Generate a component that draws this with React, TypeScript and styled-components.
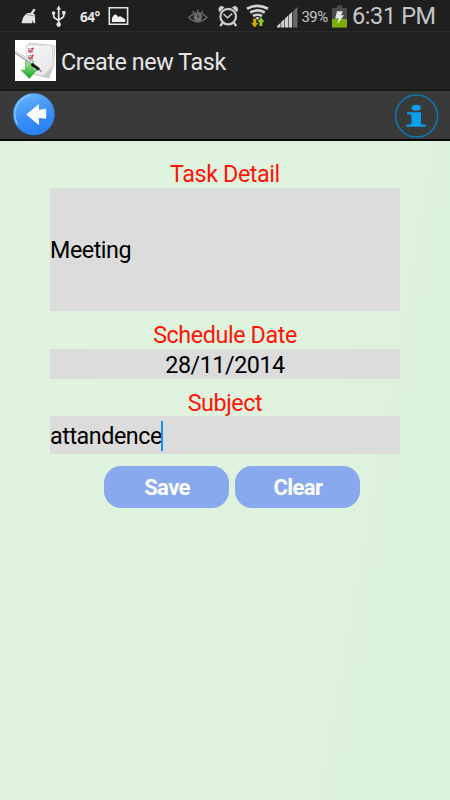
import React from "react";
import styled, { createGlobalStyle } from "styled-components";

const Global = createGlobalStyle`
  * { box-sizing: border-box; }
  body { margin: 0; background: #def2de; font-family: Roboto, "Liberation Sans", sans-serif; }
`;

const Screen = styled.div`
  width: 450px;
  height: 800px;
  overflow: hidden;
  display: flex;
  flex-direction: column;
  background: linear-gradient(100deg, #dff3df 0%, #def2de 70%, #dcf2dc 100%);
`;

const StatusBar = styled.header`
  height: 32px;
  flex: none;
  display: flex;
  background: #1f1f1f;
  border-bottom: 1px solid #2b2b2b;
  color: #c6c6c6;
`;

const Icon = styled.svg<{ $gap?: number }>`
  display: block;
  flex: none;
  margin-left: ${(p) => p.$gap ?? 0}px;
`;

const StatusText = styled.span<{ $size: number; $gap: number; $width: number; $line: number; $bold?: boolean; $spacing?: number }>`
  flex: none;
  font-family: ${(p) => (p.$bold ? '"Open Sans", sans-serif' : "Roboto, sans-serif")};
  color: ${(p) => (p.$bold ? "#e4e4e4" : "inherit")};
  font-size: ${(p) => p.$size}px;
  margin-left: ${(p) => p.$gap}px;
  width: ${(p) => p.$width}px;
  line-height: ${(p) => p.$line}px;
  font-weight: ${(p) => (p.$bold ? 700 : 400)};
  letter-spacing: ${(p) => p.$spacing ?? 0}px;
  white-space: nowrap;
`;

const TitleBar = styled.div`
  height: 59px;
  flex: none;
  display: flex;
  align-items: center;
  padding: 0 0 0 15px;
  background: #222;
  border-bottom: 2px solid #181818;
`;

const Title = styled.h1`
  margin: 2px 0 0 5px;
  font-size: 23.3px;
  line-height: 28px;
  font-weight: 400;
  letter-spacing: -0.4px;
  color: #e6e6e6;
  white-space: nowrap;
`;

const Toolbar = styled.nav`
  height: 50px;
  flex: none;
  display: flex;
  justify-content: space-between;
  padding: 0 10px 0 11px;
  background: #3a3a3a;
  border-bottom: 2px solid #080808;
`;

const ToolButton = styled.button`
  padding: 0;
  border: 0;
  background: none;
  display: flex;
  align-items: flex-start;
`;

const Form = styled.main`
  width: 350px;
  margin: 19px auto 0 50px;
  display: flex;
  flex-direction: column;
`;

const Label = styled.label<{ $top?: number; $height: number }>`
  height: ${(p) => p.$height}px;
  margin-top: ${(p) => p.$top ?? 0}px;
  line-height: 29px;
  font-size: 23.3px;
  letter-spacing: -0.4px;
  text-align: center;
  color: #ff1408;
`;

const Field = styled.div<{ $height: number; $center?: boolean; $drop?: number }>`
  height: ${(p) => p.$height}px;
  display: flex;
  align-items: center;
  justify-content: ${(p) => (p.$center ? "center" : "flex-start")};
  padding-top: ${(p) => p.$drop ?? 0}px;
  background: #dcdcdc;
  color: #000;
  font-size: 23.3px;
  line-height: 27px;
  letter-spacing: -0.45px;
`;

const Caret = styled.span`
  width: 2px;
  height: 30px;
  margin: 0 0 2px -1px;
  background: #1592f5;
`;

const Actions = styled.div`
  display: flex;
  gap: 6px;
  margin: 12px 0 0 54px;
`;

const ActionButton = styled.button`
  width: 125px;
  height: 42px;
  padding: 1px 0 0 1px;
  border: 0;
  border-radius: 17px;
  background: #88a9ee;
  color: #fff;
  font: 700 22px/27px Roboto, sans-serif;
  letter-spacing: -0.6px;
`;

const Broom = () => (
  <Icon $gap={21} width="16" height="32" viewBox="0 0 16 32" fill="#e4e4e4">
    <path d="M0.5 23.2Q2 15 6.5 13L9.5 13.1L12.8 8.6L14.6 9.7L12 13.4L14 14.5L14.2 23.2L12.4 23.1L12 20L11 23.2Z" />
    <path d="M5.5 14.5L13.6 16" stroke="#777" strokeWidth=".7" />
  </Icon>
);

const Usb = () => (
  <Icon $gap={14} width="16" height="32" viewBox="0 0 16 32" fill="#e2e2e2">
    <path d="M7.7 5.5L10 9.5H5.4Z" />
    <circle cx="7.7" cy="24.6" r="2.3" />
    <circle cx="2.6" cy="13" r="1.8" />
    <path d="M11.2 11H14.5V14.4H11.2Z" />
    <path d="M7.7 8V24M2.6 13V16.2Q2.6 17.5 4.5 18.6L7.7 20.6M12.8 13V15.6Q12.8 17 11 18L7.7 20" fill="none" stroke="#e2e2e2" strokeWidth="1.7" />
  </Icon>
);

const Gallery = () => (
  <Icon $gap={10} width="21" height="32" viewBox="0 0 21 32">
    <path d="M1.3 7.8H19.6V24.2H1.3Z" fill="#1f1f1f" stroke="#e4e4e4" strokeWidth="1.6" />
    <path d="M3.9 22V18.4Q5.5 14.6 7.2 14.6Q8.9 14.6 10.2 17L12 15.9L17.2 19.2V22Z" fill="#f1f1f1" />
  </Icon>
);

const Eye = () => (
  <Icon $gap={59} width="20" height="32" viewBox="0 0 20 32" fill="none" stroke="#6b6b6b" strokeWidth="1.4">
    <path d="M.7 17.5Q9.8 8.5 19 17.5Q9.8 26 .7 17.5Z" />
    <circle cx="9.8" cy="17.2" r="3.6" fill="#707070" />
    <path d="M9.8 14.5V17.5L11.5 16.2" stroke="#292929" strokeWidth="1" />
    <path d="M9.8 9.5V12.5M4.8 11L6 13.3M14.8 11L13.6 13.3" />
  </Icon>
);

const Alarm = () => (
  <Icon $gap={9} width="23" height="32" viewBox="0 0 23 32" fill="none" stroke="#cecece">
    <circle cx="11.2" cy="16.6" r="7.8" strokeWidth="2.2" />
    <path d="M6.5 14L10.5 17.8L15.2 13.6" strokeWidth="1.5" />
    <path d="M2.4 12.2Q-.3 7.8 4.2 5.8L7.5 7.2ZM20 12.2Q22.7 7.8 18.2 5.8L14.9 7.2Z" fill="#cecece" stroke="none" />
    <path d="M5.5 23L3.2 26M17 23L19.3 26" strokeWidth="2.3" />
  </Icon>
);

const Wifi = () => (
  <Icon $gap={6} width="23" height="32" viewBox="0 0 23 32" fill="none">
    <g stroke="#d2d2d2" strokeWidth="2.7">
      <path d="M1 8.7Q11.4 3.1 22 8.7" />
      <path d="M4.2 12.5Q11.4 8.4 18.8 12.5" />
      <path d="M7 16Q11.4 13.5 16 16" />
    </g>
    <path d="M9.3 17.7Q11.4 16.3 13.6 17.7L11.4 20Z" fill="#d2d2d2" />
    <path d="M7.2 18.8H10.2V22.9H12.2L8.7 27.5L5.2 22.9H7.2Z" fill="#d9aa00" />
    <path d="M14.9 17.3L18.4 21.9H16.4V26H13.4V21.9H11.4Z" fill="#8fce14" />
  </Icon>
);

const Signal = () => (
  <Icon $gap={8} width="22" height="32" viewBox="0 0 22 32">
    <path d="M0 27.5V26L3.6 22.7V27.5ZM4.2 27.5V22.1L7.4 19.1V27.5ZM8 27.5V18.5L11.2 15.5V27.5ZM11.8 27.5V15L15 12V27.5Z" fill="#d0d0d0" />
    <path d="M15.6 27.5V11.4L20.5 6.8V27.5Z" fill="#666" />
  </Icon>
);

const Battery = () => (
  <Icon $gap={2} width="17" height="32" viewBox="0 0 17 32">
    <path d="M6 5.5H11V8H16V27.5H1V8H6Z" fill="#4b4b4b" />
    <path d="M1 19H16V27.5H1Z" fill="#7ead0a" />
    <path d="M6 11.3H11.8L10.2 15.3H13L6.5 24.2L7.7 18.5H4.2Z" fill="#e4e4e4" />
  </Icon>
);

const AppIcon = () => (
  <Icon width="41" height="41" viewBox="0 0 41 41">
    <defs>
      <linearGradient id="paper" x1="0" y1="0" x2="1" y2="1">
        <stop stopColor="#f8f8f8" /><stop offset="1" stopColor="#e4e4e4" />
      </linearGradient>
      <linearGradient id="arrow" x1="0" y1="0" x2="0" y2="1">
        <stop stopColor="#a6ec98" /><stop offset="1" stopColor="#129d20" />
      </linearGradient>
    </defs>
    <path d="M0 0H41V41H0Z" fill="#fff" />
    <path d="M14 3L40 6L38 27L34 38L18 34Z" fill="#f0f0f0" stroke="#b5b5b5" strokeWidth=".7" />
    <path d="M11 5L37 5L39 25Q33 31 28 36L11 33Z" fill="url(#paper)" stroke="#c5c5c5" strokeWidth=".7" />
    <path d="M25 37Q34 32 38 27L34 37Z" fill="#c9cdc9" />
    <g fill="none" stroke="#969696" strokeWidth=".8">
      <path d="M13.5 8.5H17.5V12.5H13.5ZM13.5 15.5H17.5V19.5H13.5Z" />
      <path d="M14 10L15.5 11.7L18.5 7.8M14 17L15.5 18.7L18.5 14.8" stroke="#d64351" strokeWidth="1.4" />
    </g>
    <path d="M10.5 21H18.5V30H22L14.3 38.5L5.8 30H10.5Z" fill="url(#arrow)" stroke="#36af38" strokeWidth=".5" />
    <path d="M0 12L17 23" stroke="#999" strokeWidth="2.8" />
    <path d="M0 11.5L18 23.2" stroke="#e6e6e6" strokeWidth="1.5" />
    <path d="M16.5 24L24 29.5" stroke="#171717" strokeWidth="2.8" />
    <path d="M23.5 29L26.5 31.5" stroke="#333" strokeWidth="1" />
  </Icon>
);

const BackIcon = () => (
  <Icon width="46" height="48" viewBox="0 0 46 48">
    <defs>
      <linearGradient id="back" x1=".3" y1="0" x2=".6" y2="1">
        <stop stopColor="#65b7fa" /><stop offset=".5" stopColor="#3e91f5" /><stop offset="1" stopColor="#267ff5" />
      </linearGradient>
    </defs>
    <ellipse cx="23" cy="24.9" rx="20.4" ry="20.7" fill="#252b35" />
    <ellipse cx="22.8" cy="23.2" rx="20.7" ry="20.9" fill="url(#back)" stroke="#387bc2" strokeWidth=".8" />
    <path d="M6 33C1 21 5 7 20 4" fill="none" stroke="#87c5ff" strokeWidth="1.4" />
    <path d="M16 24.5L28 15V20.5L35.2 19.5V28.8L28 28V34.5Z" fill="#2e79dd" />
    <path d="M15.2 23.5L27.5 13.3Q28 13.2 28 14V18.8L34.3 17.8Q35.2 17.8 35.2 18.8V27Q35.2 28 34.3 27.8L28 27V33.4Q27.7 34 27 33.4Z" fill="#f7fbff" />
  </Icon>
);

const InfoIcon = () => (
  <Icon width="46" height="48" viewBox="0 0 46 48">
    <circle cx="22.6" cy="25.1" r="21" fill="none" stroke="#087db4" strokeWidth="1.5" />
    <ellipse cx="22.2" cy="16.7" rx="4.7" ry="3" fill="#07a0ea" />
    <path d="M13 21.2H27V32.4Q27 33.3 31.8 33.8V35.8H12.3V33.8Q17.5 33.3 17.5 32.2V24.2Q17.3 23.2 13 23Z" fill="#07a0ea" />
  </Icon>
);

export default function App() {
  return (
    <Screen>
      <Global />
      <StatusBar>
        <Broom /><Usb />
        <StatusText $size={13.5} $gap={13} $width={18} $line={34} $bold $spacing={-0.5}>64°</StatusText>
        <Gallery /><Eye /><Alarm /><Wifi /><Signal />
        <StatusText $size={15} $gap={2.5} $width={27} $line={34} $spacing={-0.6}>39%</StatusText>
        <Battery />
        <StatusText $size={23.5} $gap={4.5} $width={84} $line={33} $spacing={-0.4}>6:31 PM</StatusText>
      </StatusBar>
      <TitleBar><AppIcon /><Title>Create new Task</Title></TitleBar>
      <Toolbar>
        <ToolButton aria-label="Back"><BackIcon /></ToolButton>
        <ToolButton aria-label="Information"><InfoIcon /></ToolButton>
      </Toolbar>
      <Form>
        <Label $height={28}>Task Detail</Label>
        <Field $height={123} $drop={2}>Meeting</Field>
        <Label $top={10} $height={28}>Schedule Date</Label>
        <Field $height={30} $center $drop={2}>28/11/2014</Field>
        <Label $top={10} $height={27}>Subject</Label>
        <Field $height={38} $drop={3}>attandence<Caret /></Field>
        <Actions><ActionButton>Save</ActionButton><ActionButton>Clear</ActionButton></Actions>
      </Form>
    </Screen>
  );
}
